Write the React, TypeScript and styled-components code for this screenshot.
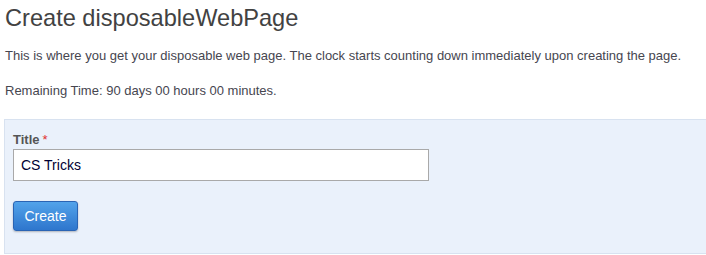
import React, { FC, useState } from 'react';
import styled, { createGlobalStyle } from 'styled-components';

const GlobalStyle = createGlobalStyle`
  html, body {
    margin: 0;
    padding: 0;
    background: #ffffff;
    font-family: 'Liberation Sans', Arial, sans-serif;
  }
`;

const Page = styled.div`
  padding: 4px 0 0 4px;
  overflow: hidden;
`;

const Heading = styled.h1`
  margin: 0 0 0 1px;
  font-size: 23.6px;
  font-weight: normal;
  line-height: 28px;
  color: #424242;
`;

const Intro = styled.div`
  margin-top: 16px;
`;

const Text = styled.p`
  margin: 0 0 0 1px;
  font-size: 13px;
  line-height: 16px;
  color: #464650;
  & + & {
    margin-top: 19px;
  }
`;

const Panel = styled.form`
  margin-top: 20px;
  margin-right: -10px;
  background: #eaf1fb;
  border: 1px solid #d8e2f0;
  padding: 12px 8px 22px 8px;
`;

const Label = styled.label`
  display: block;
  font-size: 13px;
  font-weight: bold;
  line-height: 15px;
  color: #555555;
`;

const Required = styled.span`
  color: #e03030;
  font-weight: normal;
  margin-left: 3px;
`;

const Input = styled.input`
  display: block;
  box-sizing: border-box;
  margin-top: 2px;
  width: 416px;
  height: 32px;
  padding: 0 7px;
  border: 1px solid #a9a9a9;
  background: #ffffff;
  font-family: 'Liberation Sans', Arial, sans-serif;
  font-size: 14px;
  color: #000033;
  outline: none;
`;

const Button = styled.button`
  display: block;
  margin-top: 20px;
  width: 65px;
  height: 30px;
  border: 1px solid #2a64b4;
  border-radius: 3px;
  background: linear-gradient(#52a3ea, #2e76cd);
  box-shadow: 0 1px 2px rgba(0, 0, 0, 0.25);
  color: #ffffff;
  font-family: 'Liberation Sans', Arial, sans-serif;
  font-size: 14px;
  padding: 0;
  cursor: pointer;
`;

const App: FC = () => {
  const [title, setTitle] = useState('CS Tricks');

  return (
    <Page>
      <GlobalStyle />
      <Heading>Create disposableWebPage</Heading>
      <Intro>
        <Text>
          This is where you get your disposable web page. The clock starts counting down immediately upon creating
          the page.
        </Text>
        <Text>Remaining Time: 90 days 00 hours 00 minutes.</Text>
      </Intro>
      <Panel onSubmit={(e) => e.preventDefault()}>
        <Label htmlFor="title">
          Title<Required>*</Required>
        </Label>
        <Input id="title" value={title} onChange={(e) => setTitle(e.target.value)} />
        <Button type="submit">Create</Button>
      </Panel>
    </Page>
  );
};

export default App;
